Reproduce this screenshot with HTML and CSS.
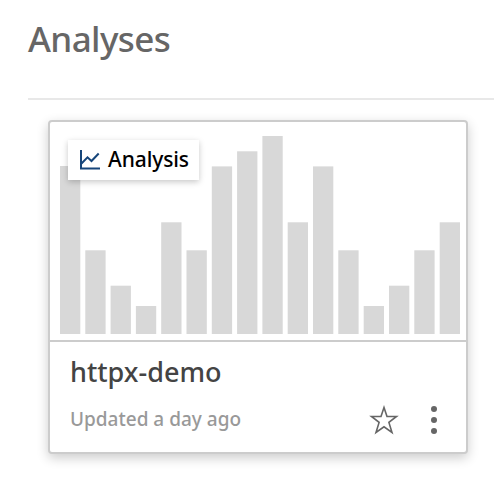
FILE: index.html
```
<!DOCTYPE html>
<html lang="en">
<head>
<meta charset="utf-8">
<title>Analyses</title>
<link rel="stylesheet" href="styles.css">
</head>
<body>
<main class="page">
  <h1 class="title"><span>Analyses</span></h1>
  <article class="card">
    <div class="preview">
      <svg class="chart" width="400" height="198" viewBox="0 0 400 198" fill="#d8d8d8">
        <rect x="0" y="30" width="20.3" height="168"/>
        <rect x="25.3" y="114.3" width="20.3" height="83.7"/>
        <rect x="50.6" y="149.7" width="20.3" height="48.3"/>
        <rect x="75.9" y="170" width="20.3" height="28"/>
        <rect x="101.2" y="86.3" width="20.3" height="111.7"/>
        <rect x="126.5" y="114.3" width="20.3" height="83.7"/>
        <rect x="151.8" y="30.4" width="20.3" height="167.6"/>
        <rect x="177.1" y="15.3" width="20.3" height="182.7"/>
        <rect x="202.4" y="0" width="20.3" height="198"/>
        <rect x="227.7" y="86.3" width="20.3" height="111.7"/>
        <rect x="253" y="30.4" width="20.3" height="167.6"/>
        <rect x="278.3" y="114.3" width="20.3" height="83.7"/>
        <rect x="303.7" y="170" width="20.3" height="28"/>
        <rect x="329" y="149.7" width="20.3" height="48.3"/>
        <rect x="354.3" y="114.3" width="20.3" height="83.7"/>
        <rect x="379.7" y="86.3" width="20.3" height="111.7"/>
      </svg>
      <div class="badge">
        <svg width="20" height="20" viewBox="0 0 20 20" fill="none" stroke="#16457a" stroke-width="2">
          <path d="M1 0V18.5H20M1.5 13.5L7.5 7.3L11.5 11L18.7 3.5"/>
        </svg>
        <span class="badge-text">Analysis</span>
      </div>
    </div>
    <div class="info">
      <h2 class="name">httpx-demo</h2>
      <div class="meta">
        <span class="updated">Updated a day ago</span>
        <svg class="star" width="30" height="30" viewBox="0 0 30 30" fill="none" stroke="#666" stroke-width="1.6">
          <path d="M15 2.5L18 11.5H27.5L19.9 17.4L23 27.5L15 21.8L7 27.5L10.1 17.4L2.5 11.5H12Z"/>
        </svg>
        <svg class="more" width="6" height="28" viewBox="0 0 6 28" fill="#666">
          <circle cx="3" cy="3" r="3"/><circle cx="3" cy="14" r="3"/><circle cx="3" cy="25" r="3"/>
        </svg>
      </div>
    </div>
  </article>
</main>
</body>
</html>
```
FILE: styles.css
```
* { box-sizing: border-box; }
body {
  margin: 0;
  background: #fff;
  font-family: "Noto Sans", "Open Sans", sans-serif;
}
.page {
  height: 488px;
  padding-left: 28px;
}
.title {
  height: 100px;
  margin: 0;
  padding-top: 15px;
  border-bottom: 2px solid #e8e8e8;
  font-size: 35px;
  line-height: 48px;
  font-weight: 500;
  color: #666;
  letter-spacing: -0.6px;
}
.card {
  width: 420px;
  height: 334px;
  margin: 20px 0 0 20px;
  border: 2px solid #ccc;
  border-radius: 4px;
  background: #fff;
  box-shadow: 0 4px 12px rgba(0, 0, 0, 0.2);
}
.preview {
  position: relative;
  height: 220px;
  padding: 14px 8px 0 10px;
  border-bottom: 2px solid #ccc;
}
.chart { display: block; }
.badge {
  position: absolute;
  left: 18px;
  top: 18px;
  width: 131px;
  height: 40px;
  padding-left: 12px;
  display: flex;
  align-items: center;
  gap: 8px;
  background: #fff;
  box-shadow: 0 2px 6px rgba(0, 0, 0, 0.22);
}
.badge-text {
  padding-bottom: 2px;
  font-size: 21px;
  line-height: 38px;
  font-weight: 500;
  color: #000;
  white-space: nowrap;
  letter-spacing: -0.1px;
}
.info { padding: 12px 29px 0 20px; }
.name {
  margin: 0;
  font-size: 27px;
  line-height: 36px;
  font-weight: 500;
  color: #444;
  white-space: nowrap;
}
.meta {
  display: flex;
  align-items: center;
  height: 30px;
  margin-top: 15px;
}
.updated {
  flex: 1;
  padding-bottom: 2px;
  font-size: 19px;
  line-height: 26px;
  font-weight: 500;
  color: #999;
  white-space: nowrap;
}
.star { margin-right: 32px; }
```
